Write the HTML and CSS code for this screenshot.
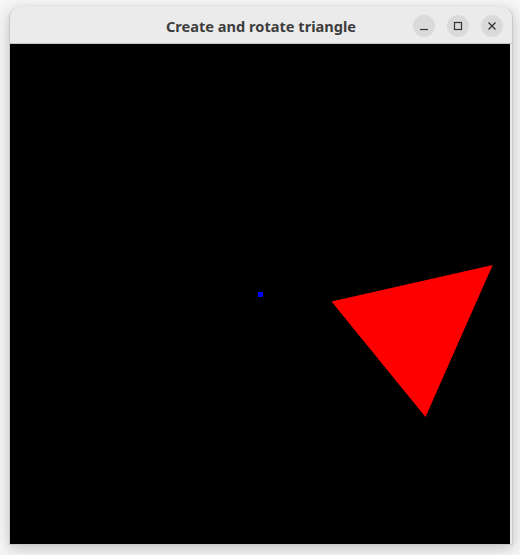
FILE: index.html
```html
<!DOCTYPE html>
<html>
<head>
<meta charset="utf-8">
<link rel="stylesheet" href="styles.css">
</head>
<body>
<div class="page">
  <div class="window">
    <div class="titlebar">
      <span class="title">Create and rotate triangle</span>
      <div class="controls">
        <span class="btn"><svg width="10" height="10" viewBox="0 0 10 10"><line x1="1" y1="8.5" x2="9" y2="8.5" stroke="#333" stroke-width="1.2"/></svg></span>
        <span class="btn"><svg width="10" height="10" viewBox="0 0 10 10"><rect x="1.5" y="1.5" width="7" height="7" fill="none" stroke="#333" stroke-width="1.2"/></svg></span>
        <span class="btn"><svg width="10" height="10" viewBox="0 0 10 10"><path d="M1.5 1.5 L8.5 8.5 M8.5 1.5 L1.5 8.5" stroke="#333" stroke-width="1.3"/></svg></span>
      </div>
    </div>
    <div class="canvas">
      <svg width="500" height="500" viewBox="0 0 500 500">
        <rect x="248" y="248" width="5" height="5" fill="#0000ff"/>
        <polygon points="321.5,257.5 482.7,221 415.5,373" fill="#ff0000"/>
      </svg>
    </div>
  </div>
</div>
</body>
</html>
```

FILE: styles.css
```css
html, body {
  margin: 0;
  padding: 0;
  background: #ffffff;
}
.page {
  width: 520px;
  height: 555px;
  padding: 7px 0 0 9px;
  box-sizing: border-box;
  background: #f6f6f6;
}
.window {
  width: 502px;
  border: 1px solid #c9c9c9;
  border-top: none;
  border-radius: 11px 11px 0 0;
  box-shadow: 0 3px 14px rgba(0, 0, 0, 0.22);
  background: #ebebeb;
}
.titlebar {
  position: relative;
  height: 36px;
  border-bottom: 1px solid #c6c6c6;
  border-radius: 11px 11px 0 0;
  background: #ebebeb;
  display: flex;
  align-items: center;
  justify-content: center;
}
.title {
  font-family: "Noto Sans", "DejaVu Sans", sans-serif;
  font-weight: bold;
  font-size: 14.6px;
  color: #3d3d3d;
  margin: 2px 0 0 0;
}
.controls {
  position: absolute;
  right: 9px;
  top: 8px;
  display: flex;
  gap: 12px;
}
.btn {
  width: 22px;
  height: 22px;
  border-radius: 50%;
  background: #dadada;
  display: flex;
  align-items: center;
  justify-content: center;
}
.canvas {
  width: 500px;
  height: 500px;
  background: #000;
}
.canvas svg {
  display: block;
}
```
